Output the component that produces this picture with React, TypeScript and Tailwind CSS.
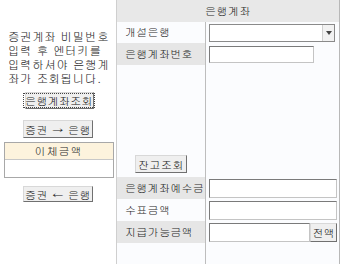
const font = "font-['Gulim','Noto_Sans_CJK_KR','Noto_Sans',sans-serif]";

function OldButton({ children, className = '', focused = false }: { children: React.ReactNode; className?: string; focused?: boolean }) {
  return (
    <button
      type="button"
      className={`flex shrink-0 items-center justify-center whitespace-nowrap border border-t-[#d8d8d8] border-l-[#d8d8d8] border-b-[#707070] border-r-[#707070] bg-[#efefef] p-0 text-[11px] leading-none text-[#222] ${className}`}
    >
      <span className={`px-[1px] py-[1px] ${focused ? 'outline outline-1 outline-dotted outline-[#444]' : ''}`}>{children}</span>
    </button>
  );
}

function TextBox({ className = '' }: { className?: string }) {
  return (
    <div className={`shrink-0 border border-t-[#7a7a7a] border-l-[#7a7a7a] border-b-[#c4c4c4] border-r-[#c4c4c4] bg-white ${className}`} />
  );
}

function Row({ label, gray, children, h = 'h-[22px]' }: { label: string; gray?: boolean; children?: React.ReactNode; h?: string }) {
  return (
    <div className={`flex shrink-0 ${h}`}>
      <div className={`flex w-[89px] items-center whitespace-nowrap border-r border-[#bdbdbd] pl-[8px] tracking-[0.3px] ${gray ? 'bg-[#e6e6e6]' : ''}`}>
        {label}
      </div>
      <div className="flex flex-1 items-center pl-[3px]">{children}</div>
    </div>
  );
}

export default function App() {
  return (
    <div className={`flex h-[264px] w-[341px] bg-white text-[11px] text-[#2a2a2a] ${font}`}>
      <div className="flex w-[117px] shrink-0 flex-col items-center border-r border-[#cfcfcf]">
        <p className="mt-[29px] w-full shrink-0 pl-[8px] pr-[2px] text-[11.5px] leading-[14px] tracking-[0.6px]">
          증권계좌 비밀번호 입력 후 엔터키를 입력하셔야 은행계좌가 조회됩니다.
        </p>
        <OldButton focused className="mt-[7px] ml-[2px] h-[17px] w-[69px] tracking-[0.3px]">은행계좌조회</OldButton>
        <OldButton className="mt-[11px] h-[18px] w-[70px] tracking-[0.5px]">증권 → 은행</OldButton>
        <div className="mt-[4px] ml-[1px] w-[110px] shrink-0 border border-[#a8a8a8]">
          <div className="flex h-[17px] items-center justify-center border-b border-[#c8c8c8] bg-[#fdf3dd] tracking-[1px]">
            이체금액
          </div>
          <div className="h-[17px] bg-white" />
        </div>
        <OldButton className="mt-[8px] h-[16px] w-[70px] tracking-[0.5px]">증권 ← 은행</OldButton>
      </div>

      <div className="flex w-[223px] shrink-0 flex-col border-r border-[#b8b8b8] bg-[#fbfcfe]">
        <div className="flex h-[22px] shrink-0 items-center justify-center bg-[#e8e8e8] tracking-[0.5px]">은행계좌</div>
        <Row label="개설은행" h="h-[21px]">
          <div className="flex h-[18px] w-[126px] shrink-0 border border-[#8a8a8a] bg-white">
            <div className="flex-1" />
            <div className="flex w-[12px] items-center justify-center border-l border-[#d0d0d0] bg-[#f2f2f2]">
              <div className="h-0 w-0 border-x-[3px] border-t-[4px] border-x-transparent border-t-[#444]" />
            </div>
          </div>
        </Row>
        <Row label="은행계좌번호" gray>
          <TextBox className="h-[17px] w-[105px]" />
        </Row>
        <div className="flex h-[112px] shrink-0">
          <div className="flex w-[89px] items-end justify-center border-r border-[#bdbdbd] pb-[4px]">
            <OldButton className="h-[18px] w-[52px] tracking-[0.5px]">잔고조회</OldButton>
          </div>
        </div>
        <Row label="은행계좌예수금" gray>
          <TextBox className="h-[19px] w-[128px]" />
        </Row>
        <Row label="수표금액">
          <TextBox className="h-[19px] w-[128px]" />
        </Row>
        <Row label="지급가능금액" gray>
          <TextBox className="h-[19px] w-[101px]" />
          <OldButton className="h-[19px] w-[27px]">전액</OldButton>
        </Row>
        <div className="flex flex-1">
          <div className="w-[89px] border-r border-[#bdbdbd]" />
        </div>
      </div>
    </div>
  );
}
